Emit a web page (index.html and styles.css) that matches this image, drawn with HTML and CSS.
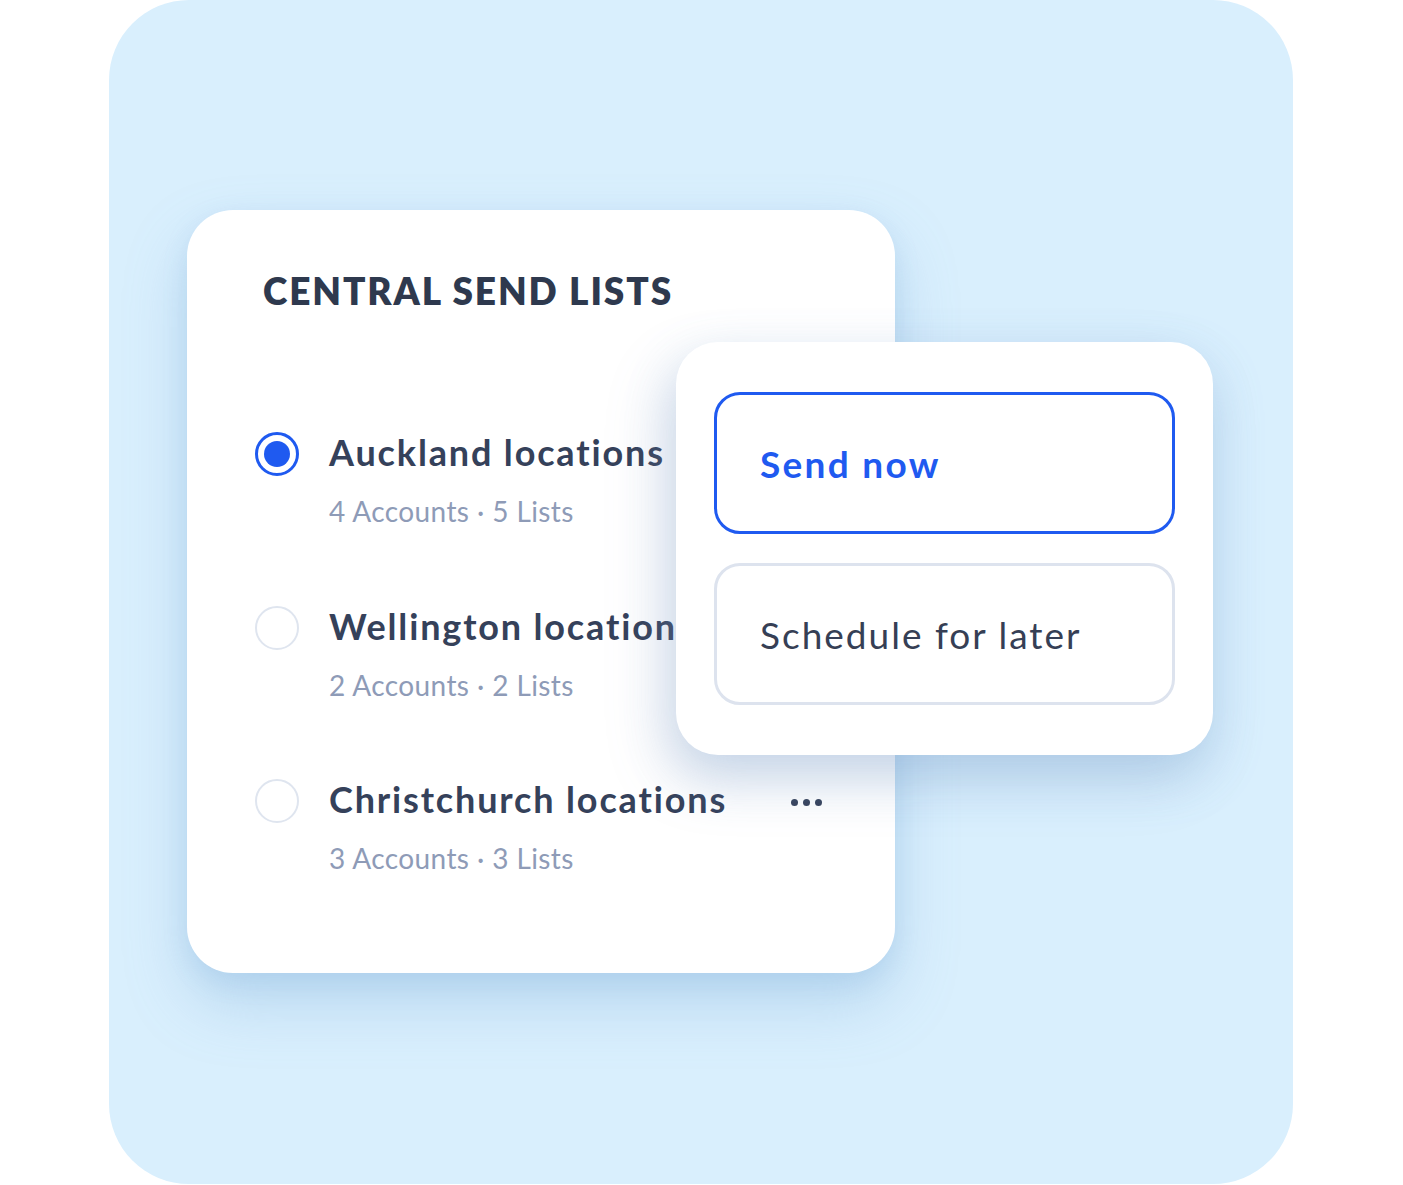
FILE: index.html
```html
<!DOCTYPE html>
<html lang="en">
<head>
<meta charset="utf-8">
<title>Central send lists</title>
<link rel="stylesheet" href="styles.css">
</head>
<body>
  <div class="stage">
    <section class="lists-card">
      <h2 class="lists-title">CENTRAL SEND LISTS</h2>
      <ul class="lists">
        <li class="list-item">
          <span class="radio radio--on"></span>
          <div class="list-text">
            <div class="list-name">Auckland locations</div>
            <div class="list-meta">4 Accounts · 5 Lists</div>
          </div>
        </li>
        <li class="list-item">
          <span class="radio"></span>
          <div class="list-text">
            <div class="list-name">Wellington locations</div>
            <div class="list-meta">2 Accounts · 2 Lists</div>
          </div>
        </li>
        <li class="list-item">
          <span class="radio"></span>
          <div class="list-text">
            <div class="list-name">Christchurch locations</div>
            <div class="list-meta">3 Accounts · 3 Lists</div>
          </div>
          <span class="more" aria-label="More"><i></i><i></i><i></i></span>
        </li>
      </ul>
    </section>

    <div class="send-menu">
      <button class="send-option send-option--active">Send now</button>
      <button class="send-option">Schedule for later</button>
    </div>
  </div>
</body>
</html>
```

FILE: styles.css
```css
* { box-sizing: border-box; }

html, body {
  margin: 0;
  padding: 0;
  background: #ffffff;
}

body {
  font-family: Lato, "Noto Sans", "Liberation Sans", sans-serif;
  color: #34405a;
}

.stage {
  position: relative;
  margin-left: 109px;
  width: 1184px;
  height: 1184px;
  border-radius: 80px;
  background: #d9effd;
  padding-top: 210px;
  padding-left: 78px;
}

/* main card with the lists */
.lists-card {
  width: 708px;
  height: 763px;
  background: #ffffff;
  border-radius: 46px;
  padding: 58px 0 0 76px;
  box-shadow: 0 30px 60px rgba(120, 170, 215, 0.35), 0 8px 24px rgba(120, 170, 215, 0.18);
}

.lists-title {
  margin: 0;
  font-size: 37px;
  font-weight: 800;
  letter-spacing: 1.9px;
  color: #2e394e;
  line-height: 46px;
}

.lists {
  list-style: none;
  margin: 0;
  padding: 0;
  margin-top: 116px;
}

.list-item {
  display: flex;
  align-items: flex-start;
  height: 173.5px;
}

.radio {
  flex: none;
  width: 44px;
  height: 44px;
  margin-left: -8px;
  margin-top: 2px;
  border-radius: 50%;
  border: 2.5px solid #dfe5ef;
  background: #ffffff;
  position: relative;
}

.radio--on {
  border: 3px solid #1f5af0;
}

.radio--on::after {
  content: "";
  position: absolute;
  left: 50%;
  top: 50%;
  width: 26px;
  height: 26px;
  margin: -13px 0 0 -13px;
  border-radius: 50%;
  background: #1f5af0;
}

.list-text {
  margin-left: 30px;
}

.list-name {
  font-size: 36px;
  font-weight: 700;
  letter-spacing: 1.85px;
  color: #35415a;
  line-height: 44px;
  white-space: nowrap;
}

.list-meta {
  margin-top: 20px;
  font-size: 28px;
  font-weight: 400;
  letter-spacing: 0.4px;
  color: #8e9bb7;
  line-height: 34px;
  white-space: nowrap;
}

.more {
  display: flex;
  gap: 5px;
  margin-left: 64px;
  margin-top: 22px;
}

.more i {
  display: block;
  width: 7px;
  height: 7px;
  border-radius: 50%;
  background: #35415a;
}

/* floating send options menu */
.send-menu {
  position: absolute;
  left: 567px;
  top: 342px;
  width: 537px;
  height: 413px;
  background: #ffffff;
  border-radius: 42px;
  padding: 50px 38px 0 38px;
  display: flex;
  flex-direction: column;
  gap: 29px;
  box-shadow: -14px 24px 60px rgba(110, 130, 170, 0.18), 0 20px 50px rgba(120, 170, 215, 0.3);
}

.send-option {
  height: 142px;
  border-radius: 26px;
  border: 3px solid #dde3ee;
  background: #ffffff;
  text-align: left;
  padding: 0 0 0 43px;
  font-family: inherit;
  font-size: 37px;
  font-weight: 400;
  letter-spacing: 2px;
  color: #363f55;
}

.send-option--active {
  border-color: #1f5af0;
  color: #1f5af0;
  font-weight: 700;
  letter-spacing: 2.3px;
}
```
